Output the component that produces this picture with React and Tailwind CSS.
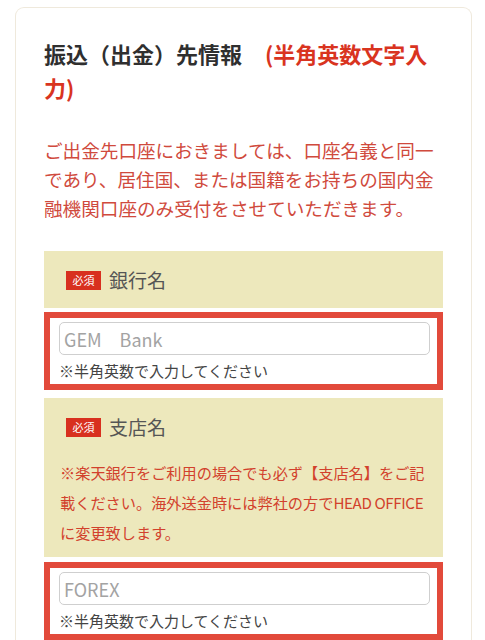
const jp = {fontFamily: '"Noto Sans CJK JP", "Noto Sans", sans-serif'};

function Required() {
    return (
        <span className="inline-flex h-[19px] w-[35px] items-center justify-center bg-[#d8301f] text-[11px] leading-none text-white">
            必須
        </span>
    );
}

function InputBox({placeholder}) {
    return (
        <div className="border-[6px] border-[#e24a3b] bg-white pl-[9px] pr-[7px] pt-[4px] pb-[2px]">
            <input
                className="block h-[33px] w-full rounded-[5px] border border-[#cfcfcf] bg-white px-[4px] text-[18px] text-[#333] placeholder:text-[#a3a3a3] outline-none"
                placeholder={placeholder}
                style={jp}
            />
            <p className="mt-[5px] text-[15px] leading-[22px] text-[#444]">※半角英数で入力してください</p>
        </div>
    );
}

export default function App() {
    return (
        <div className="min-h-screen bg-white pt-[7px] pl-[15px] pr-[13px]" style={jp}>
            <div className="rounded-t-[9px] border border-b-0 border-[#efe9dc] px-[28px] pt-[28px]">
                {/* Heading */}
                <h2 className="text-[22px] font-bold leading-[34px] text-[#2f2f2f]">
                    振込（出金）先情報
                    <span className="pl-[23px] text-[#d9341f]">(半角英数文字入力)</span>
                </h2>

                <p className="mt-[31px] text-[18.6px] leading-[29px] text-[#d04a3d]">
                    ご出金先口座におきましては、口座名義と同一であり、居住国、または国籍をお持ちの国内金融機関口座のみ受付をさせていただきます。
                </p>

                {/* Bank name */}
                <div className="mt-[29px] bg-[#ede8bc] pt-[15px] pb-[14px] pl-[22px]">
                    <div className="flex h-[28px] items-center gap-[8px]">
                        <Required />
                        <span className="text-[19px] text-[#555]">銀行名</span>
                    </div>
                </div>
                <div className="mt-[4px]">
                    <InputBox placeholder="GEM　Bank" />
                </div>

                {/* Branch name */}
                <div className="mt-[8px] bg-[#ede8bc] pt-[15px] pb-[10px] px-[16px]">
                    <div className="flex h-[28px] items-center gap-[8px] pl-[6px]">
                        <Required />
                        <span className="text-[19px] text-[#555]">支店名</span>
                    </div>
                    <p className="mt-[16px] whitespace-nowrap text-[15.2px] leading-[30px] text-[#d2412c]">
                        ※楽天銀行をご利用の場合でも必ず【支店名】をご記
                        <br />
                        載ください。海外送金時には弊社の方で<span className="tracking-[-0.4px]">HEAD OFFICE</span>
                        <br />
                        に変更致します。
                    </p>
                </div>
                <div className="mt-[5px]">
                    <InputBox placeholder="FOREX" />
                </div>
            </div>
        </div>
    );
}
